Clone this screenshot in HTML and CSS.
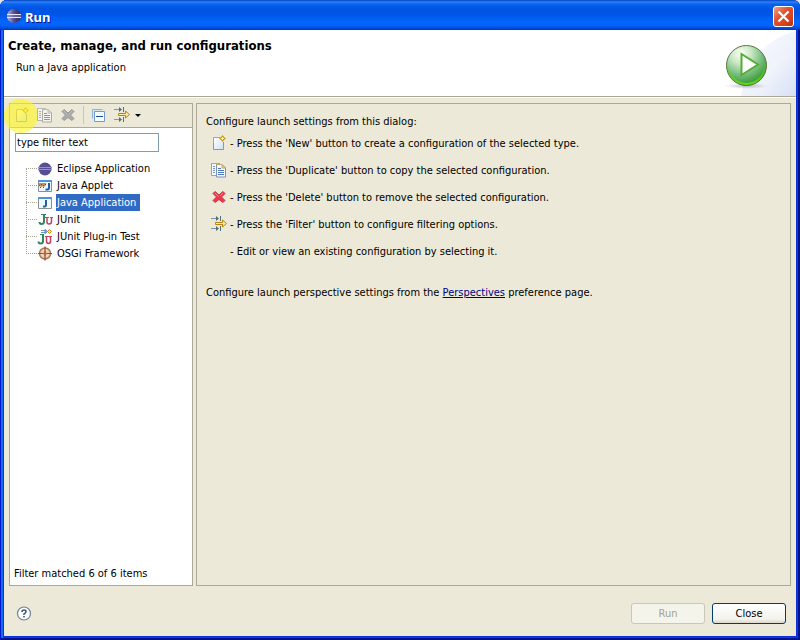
FILE: index.html
```html
<!DOCTYPE html>
<html lang="en">
<head>
<meta charset="utf-8">
<title>Run</title>
<link rel="stylesheet" href="styles.css">
</head>
<body>
<svg class="defs" aria-hidden="true">
  <defs>
    <linearGradient id="page" x1="0" y1="0" x2="1" y2="1"><stop offset="0" stop-color="#fff"/><stop offset="1" stop-color="#d3e2f8"/></linearGradient>
    <linearGradient id="ball" x1="0" y1="0" x2="1" y2="0"><stop offset="0" stop-color="#b9b6dc"/><stop offset=".5" stop-color="#544c90"/><stop offset="1" stop-color="#2b2560"/></linearGradient>
    <radialGradient id="green" cx=".36" cy=".2" r=".85"><stop offset="0" stop-color="#fafff6"/><stop offset=".3" stop-color="#cbe8c6"/><stop offset=".65" stop-color="#72ba78"/><stop offset=".88" stop-color="#3f9f38"/><stop offset="1" stop-color="#2f8a14"/></radialGradient>
    <linearGradient id="rim" x1="0" y1="0" x2="0" y2="1"><stop offset=".4" stop-color="#62ce28" stop-opacity="0"/><stop offset="1" stop-color="#62d61e"/></linearGradient>
    <linearGradient id="swoosh" x1="0" y1="0" x2="1" y2="1"><stop offset="0" stop-color="#fff"/><stop offset="1" stop-color="#d6dff4"/></linearGradient>
    <radialGradient id="shade"><stop offset="0" stop-color="#777" stop-opacity=".5"/><stop offset="1" stop-color="#999" stop-opacity="0"/></radialGradient>
    <symbol id="i-new" viewBox="0 0 16 16">
      <path d="M2.500 2.500h10v12h-10z" fill="url(#page)"/>
      <path d="M9 2.500H2.500v6" fill="none" stroke="#b8a46a"/>
      <path d="M2.500 8v6.500h10V7" fill="none" stroke="#8b96a8"/>
      <path d="M11.500 0l1.500 2 2 1.500-2 1.500-1.500 2-1.500-2-2-1.500 2-1.500z" fill="#c9980f"/>
      <path d="M11.500 2v3M10 3.500h3" stroke="#fff3b0"/>
    </symbol>
    <symbol id="i-dup" viewBox="0 0 16 16">
      <path d="M.5 1.500h8v12h-8z" fill="#f4f8ff" stroke="#93a1ba"/>
      <path d="M0 1.500h9" stroke="#c1a862"/>
      <path d="M2 4.500h2M2 6.500h2M2 8.500h2M2 10.500h2" stroke="#7896c8"/>
      <path d="M5.500 2.500H11L14.500 6v9h-9z" fill="#f2f7ff" stroke="#8190ae"/>
      <path d="M11 2.500V6h3.500z" fill="#f0d88c"/>
      <path d="M5 2.500h6L14.500 6H11V3" fill="none" stroke="#c1a862"/>
      <path d="M7 6.500h3M7 8.500h6M7 10.500h6M7 12.500h6" stroke="#4e78bd"/>
    </symbol>
    <symbol id="i-del" viewBox="0 0 16 16">
      <path d="M4 2.500L8 6 12 2.500 14 4.500 10.500 8 14 11.500 12 13.500 8 10.500 4 13.500 2 11.500 5.500 8 2 4.500z" fill="var(--x-fill)" stroke="var(--x-edge)" stroke-linejoin="round"/>
      <path d="M4 4l3.500 3.500M12 4L9 7" stroke="var(--x-light)"/>
    </symbol>
    <symbol id="i-filter" viewBox="0 0 16 16">
      <path d="M0 2.500h6M0 12.500h6" stroke="#7d97aa"/>
      <path d="M5 0l3 2.500L5 5zM5 10l3 2.500L5 15z" fill="#536e80"/>
      <path d="M9.500 0v5M9.500 10v5" stroke="#5a6f7e"/>
      <path d="M4.500 6.500h7V4l4 3.500-4 3.500V8.500h-7z" fill="#ffe9a2" stroke="#bd820a"/>
    </symbol>
    <symbol id="i-collapse" viewBox="0 0 16 16">
      <path d="M1 2h10v9H1z" fill="#d5e5f5"/>
      <path d="M1.500 11.500v-9h10" fill="none" stroke="#8fb1d8"/>
      <path d="M3.500 4.500h10v10h-10z" fill="#f6fbff" stroke="#739bc9"/>
      <path d="M5 9.500h7" stroke="#174e8c"/>
    </symbol>
    <symbol id="i-eclipse" viewBox="0 0 16 16">
      <circle cx="8" cy="8" r="6.500" fill="#584e93"/>
      <path d="M1 6.500h14M1 8.500h14" stroke="#8592ec"/>
    </symbol>
    <symbol id="i-applet" viewBox="0 0 16 16">
      <path d="M1.500 2.500h13v11h-13z" fill="#eaf5ff" stroke="#8c8f91"/>
      <path d="M1 3h14" stroke="#4f94d4" stroke-width="2"/>
      <path d="M2 5h7v2l-2 2-1-1-1 1-3-1z" fill="#c98a55"/>
      <path d="M2 7.500h1M4 6.500h1M6 7.500h1M8 6.500h1M3 9.500h1M6 9.500h1" stroke="#7d4526"/>
      <path d="M12 5v5q0 2-3.500 1.500" fill="none" stroke="#245f9b" stroke-width="2"/>
    </symbol>
    <symbol id="i-app" viewBox="0 0 16 16">
      <path d="M1.500 2.500h13v11h-13z" fill="#eef8ff" stroke="#8c8f91"/>
      <path d="M1 3h14" stroke="#4f94d4" stroke-width="2"/>
      <path d="M9 5v5q0 2-3 1.500" fill="none" stroke="#245f9b" stroke-width="2"/>
    </symbol>
    <symbol id="i-junit" viewBox="0 0 16 16">
      <path d="M4 2.500h5" stroke="#2a8b5b"/>
      <path d="M7 2v7.500q0 2.500-2.500 2.500-2 0-2-2" fill="none" stroke="#2a8b5b" stroke-width="2"/>
      <path d="M8 5.500h4M13 5.500h3" stroke="#c8415f"/>
      <path d="M10 5v5q0 2 2 2 2.500 0 2.500-2.500V5" fill="none" stroke="#c8415f" stroke-width="1.500"/>
    </symbol>
    <symbol id="i-plugtest" viewBox="0 0 16 16">
      <path d="M3 5.500h4" stroke="#2a8b5b"/>
      <path d="M6 5v7q0 2.500-2.500 2.500-2 0-2-2" fill="none" stroke="#2a8b5b" stroke-width="2"/>
      <path d="M8 7.500h4M12 7.500h3" stroke="#c8415f"/>
      <path d="M9.500 7v5q0 2.500 2 2.500t2-2.500V7" fill="none" stroke="#c8415f" stroke-width="1.500"/>
      <path d="M4 1.500h4M4 3.500h4" stroke="#6d96c9"/>
      <path d="M8 .5l2.500 2L8 4.500z" fill="#8cb1dc" stroke="#5d86b9"/>
      <path d="M12.500 .5l2 2-2 2-2-2z" fill="#ffe98b" stroke="#b98912"/>
    </symbol>
    <symbol id="i-osgi" viewBox="0 0 16 16">
      <circle cx="8" cy="7.500" r="5.500" fill="#f0d2b5" stroke="#a9795a" stroke-width="1.500"/>
      <path d="M8 .5v14M1 7.500h14" stroke="#8b4c34" stroke-width="1.200"/>
      <path d="M8 4.500l1 2 2 1-2 1-1 2-1-2-2-1 2-1z" fill="#a86e4a"/>
    </symbol>
  </defs>
</svg>

<div class="window">
  <header class="titlebar">
    <svg class="icon" viewBox="0 0 16 16" aria-hidden="true"><circle cx="8" cy="7" r="7" fill="url(#ball)"/><path d="M1 5.500h14M1 8.500h14" stroke="#e4e5ff"/><path d="M1 7h14" stroke="#7e7eb8"/></svg>
    <h1>Run</h1>
    <button class="close" type="button" aria-label="Close window"><svg viewBox="0 0 19 19" aria-hidden="true"><path d="M4.500 4.500l10 10M14.500 4.500l-10 10" stroke="#fff" stroke-width="2.200"/></svg></button>
  </header>

  <div class="client">
    <section class="banner">
      <div class="banner-text">
        <h2>Create, manage, and run configurations</h2>
        <p>Run a Java application</p>
      </div>
      <svg class="banner-art" viewBox="0 0 75 66" aria-hidden="true">
        <path d="M20 66Q30 12 75 1V66z" fill="url(#swoosh)" opacity=".75"/>
        <path d="M40 66Q40 26 75 21V66z" fill="url(#swoosh)" opacity=".9"/>
        <ellipse cx="25" cy="56" rx="22" ry="3" fill="url(#shade)"/>
        <circle cx="25.500" cy="35.500" r="20" fill="url(#green)" stroke="#5d7140"/>
        <circle cx="25.500" cy="35.500" r="18.500" fill="none" stroke="url(#rim)" stroke-width="2"/>
        <path d="M20.500 24v21L37 34.500z" fill="#fff" stroke="#55ad32" stroke-width="2"/>
      </svg>
    </section>

    <main class="panes">
      <section class="pane list-pane">
        <div class="toolbar" role="toolbar" aria-label="Configurations">
          <button class="tool highlighted" type="button" aria-label="New"><svg class="icon"><use href="#i-new"/></svg></button>
          <button class="tool gray" type="button" aria-label="Duplicate" disabled><svg class="icon"><use href="#i-dup"/></svg></button>
          <button class="tool off" type="button" aria-label="Delete" disabled><svg class="icon"><use href="#i-del"/></svg></button>
          <span class="separator"></span>
          <button class="tool" type="button" aria-label="Collapse all"><svg class="icon"><use href="#i-collapse"/></svg></button>
          <button class="tool" type="button" aria-label="Filter"><svg class="icon"><use href="#i-filter"/></svg><span class="caret"></span></button>
        </div>
        <div class="list-body">
          <input class="filter" type="text" value="type filter text" aria-label="Filter">
          <ul class="tree">
            <li><svg class="icon"><use href="#i-eclipse"/></svg><span>Eclipse Application</span></li>
            <li><svg class="icon"><use href="#i-applet"/></svg><span>Java Applet</span></li>
            <li><svg class="icon"><use href="#i-app"/></svg><span class="selected">Java Application</span></li>
            <li><svg class="icon"><use href="#i-junit"/></svg><span>JUnit</span></li>
            <li><svg class="icon"><use href="#i-plugtest"/></svg><span>JUnit Plug-in Test</span></li>
            <li><svg class="icon"><use href="#i-osgi"/></svg><span>OSGi Framework</span></li>
          </ul>
          <p class="status">Filter matched 6 of 6 items</p>
        </div>
      </section>

      <section class="pane help-pane">
        <p>Configure launch settings from this dialog:</p>
        <ul class="hints">
          <li><svg class="icon"><use href="#i-new"/></svg>- Press the 'New' button to create a configuration of the selected type.</li>
          <li><svg class="icon"><use href="#i-dup"/></svg>- Press the 'Duplicate' button to copy the selected configuration.</li>
          <li><svg class="icon"><use href="#i-del"/></svg>- Press the 'Delete' button to remove the selected configuration.</li>
          <li><svg class="icon"><use href="#i-filter"/></svg>- Press the 'Filter' button to configure filtering options.</li>
          <li class="plain">- Edit or view an existing configuration by selecting it.</li>
        </ul>
        <p>Configure launch perspective settings from the <a href="#perspectives">Perspectives</a> preference page.</p>
      </section>
    </main>

    <footer class="actions">
      <button class="help" type="button" aria-label="Help"><svg class="icon" viewBox="0 0 16 16"><circle cx="8" cy="7.500" r="6.500" fill="#fff" stroke="#6b819c" stroke-width="1.200"/><path d="M6 6q0-2 2-2t2 1.500q0 1.500-2 2.500v1M8 10v1.500" fill="none" stroke="#3f5878" stroke-width="1.600"/></svg></button>
      <button class="push" type="button" disabled>Run</button>
      <button class="push default" type="button">Close</button>
    </footer>
  </div>
</div>
</body>
</html>
```
FILE: styles.css
```css
:root {
  --x-fill: #ec3a4c;
  --x-edge: #d03040;
  --x-light: #ff8c92;
  --line: #aca899;
  --face: #ece9d8;
}
* { box-sizing: border-box; }
body {
  margin: 0;
  background: #dbe3f0;
  color: #000;
  font: 11px/13px Tahoma, "DejaVu Sans Condensed", sans-serif;
}
h1, h2, p, ul { margin: 0; padding: 0; }
ul { list-style: none; }
button, input { font: inherit; color: inherit; }
.defs { position: absolute; width: 0; height: 0; }
.icon { display: block; flex: none; width: 16px; height: 16px; }

.window {
  display: flex;
  flex-direction: column;
  min-height: 100vh;
  padding: 0 4px 4px;
  border-radius: 7px 7px 0 0;
  background: #0831d9;
  box-shadow: inset 1px 0 #0019cf, inset -2px -2px #00138c, inset 3px 0 #166aee, inset -3px -3px #0a3fe8;
}
.titlebar {
  display: flex;
  align-items: center;
  gap: 3px;
  height: 30px;
  margin: 0 -4px;
  padding: 3px 6px 0;
  border-radius: 7px 7px 0 0;
  background: linear-gradient(#0842c0 0, #2b83f8 2px, #0a64ee 4px, #0055e5 8px, #0055e5 14px, #0266fe 22px, #0261f7 26px, #0142cc 29px, #0038b8);
}
.titlebar h1 {
  flex: 1;
  color: #fff;
  font: bold 13px/16px "Trebuchet MS", "Noto Sans", sans-serif;
  text-shadow: 1px 1px #0f1089;
}
.close {
  width: 21px;
  height: 21px;
  padding: 0;
  border: 1px solid #fff;
  border-radius: 3px;
  background: linear-gradient(135deg, #f0a088, #e0532f 40%, #d5401b 75%, #b5300e);
}
.close svg { display: block; width: 19px; height: 19px; }

.client { display: flex; flex: 1; flex-direction: column; background: var(--face); }
.banner {
  display: flex;
  justify-content: space-between;
  height: 67px;
  border-bottom: 1px solid var(--line);
  background: #fff;
  box-shadow: 0 1px #fff;
}
.banner-text { padding: 8px 4px; }
.banner h2 { font-size: 13px; line-height: 16px; }
.banner p { padding: 7px 8px; }
.banner-art { width: 75px; height: 66px; }

.panes { display: flex; flex: 1; gap: 3px; padding: 6px 5px 0; }
.pane { border: 1px solid var(--line); }
.list-pane { display: flex; flex-direction: column; flex: 0 0 184px; background: #fff; }
.help-pane { flex: 1; padding: 11px 9px; }

.toolbar {
  display: flex;
  align-items: center;
  height: 24px;
  padding: 0 4px 1px;
  border-bottom: 1px solid var(--line);
  background: var(--face);
}
.tool {
  position: relative;
  display: flex;
  align-items: center;
  margin-right: 7px;
  padding: 0;
  border: 0;
  background: none;
}
.gray .icon { filter: grayscale(1); opacity: .7; }
.off { --x-fill: #aaa; --x-edge: #999; --x-light: #bbb; }
.highlighted::after {
  position: absolute;
  inset: -8px -8px -10px -10px;
  border-radius: 50%;
  background: #fff61c;
  content: "";
  opacity: .6;
}
.separator { width: 1px; height: 18px; margin-right: 7px; background: #c9c6b5; }
.caret { margin-left: 5px; border: 3px solid transparent; border-top-color: #000; border-bottom: 0; }

.list-body { display: flex; flex: 1; flex-direction: column; padding: 5px 4px; }
.filter {
  width: 144px;
  height: 19px;
  margin-left: 1px;
  padding: 0 1px;
  border: 1px solid #7f9db9;
  background: #fff;
}
.tree { position: relative; flex: 1; margin: 8px 0 0 12px; }
.tree::before {
  position: absolute;
  top: 9px;
  left: 0;
  height: 85px;
  border-left: 1px dotted #a5a292;
  content: "";
}
.tree li { display: flex; align-items: center; height: 17px; }
.tree li::before { width: 11px; border-top: 1px dotted #a5a292; content: ""; }
.tree span { margin-left: 3px; padding: 2px 4px 2px 1px; white-space: nowrap; }
.tree .selected { background: #316ac5; color: #fff; }
.status { white-space: nowrap; }

.hints { display: grid; gap: 11px; margin: 7px 0 27px 5px; }
.hints li { display: flex; align-items: center; gap: 3px; height: 16px; }
.hints .plain { padding-left: 19px; }
a { color: #00007f; }

.actions {
  display: flex;
  align-items: center;
  gap: 7px;
  padding: 17px 10px 12px 12px;
}
.help { margin-right: auto; padding: 0; border: 0; background: none; }
.push {
  width: 74px;
  height: 21px;
  padding: 0;
  border: 1px solid #c9c7ba;
  border-radius: 3px;
  background: #f5f4ea;
}
.push:disabled { color: #a1a192; }
.push.default { border-color: #003c74; background: linear-gradient(#fff, #f3f2ec 80%, #dcd7cb); }
```
